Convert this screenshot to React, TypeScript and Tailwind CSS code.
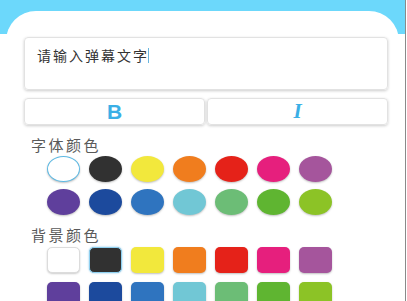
import React from "react";

const row1 = ["#ffffff", "#313131", "#f2e83c", "#f07d1e", "#e52219", "#e61f7d", "#a5559c"];
const row2 = ["#5f3f9c", "#1c4a9d", "#2f74bf", "#71c7d5", "#6cbd76", "#5fb531", "#8cc326"];

function Circle({ c, selected }: { c: string; selected?: boolean }) {
  return (
    <div
      className={
        "w-[33px] h-[26px] rounded-[50%] shadow-[0_1px_2px_rgba(0,0,0,0.25)] " +
        (selected ? "border-[1.5px] border-[#5db9e3]" : "")
      }
      style={{ backgroundColor: c }}
    />
  );
}

function Square({ c, idx }: { c: string; idx: number }) {
  let extra = "shadow-[0_1px_2px_rgba(0,0,0,0.25)]";
  if (idx === 0) extra = "border border-[#dcdcdc] shadow-[0_1px_2px_rgba(0,0,0,0.2)]";
  if (idx === 1) extra = "border-[1.5px] border-[#8fd0f0] shadow-[0_0_2px_rgba(90,180,230,0.8)]";
  return <div className={"w-[33px] h-[26px] rounded-[5px] " + extra} style={{ backgroundColor: c }} />;
}

export default function App() {
  return (
    <div className="w-[407px] h-[301px] overflow-hidden bg-white flex" style={{ fontFamily: '"Noto Sans CJK SC", "Noto Sans", sans-serif' }}>
      <div className="w-[405px] h-[301px] bg-[linear-gradient(to_bottom,#6cd8fb_34px,#ffffff_34px)] pt-[11px] pl-[6px]">
        <div className="w-[393px] h-[300px] bg-white rounded-t-[30px] pt-[26px] pl-[18px]">
          <div className="w-[364px] h-[53px] border border-[#e2e2e2] rounded-[4px] shadow-[0_1px_3px_rgba(0,0,0,0.2)] pl-[12px] pt-[7px] flex items-start">
            <span className="text-[14px] leading-[20px] tracking-[2px] text-[#333]">请输入弹幕文字</span>
            <span className="w-[1px] h-[15px] bg-[#6ab6de] mt-[3px] -ml-[1px]" />
          </div>
          <div className="flex gap-[2px] mt-[8px] w-[364px]">
            <div className="w-[181px] h-[27px] border border-[#e2e2e2] rounded-[4px] shadow-[0_1px_3px_rgba(0,0,0,0.2)] flex items-center justify-center">
              <span className="text-[#3aafe6] font-bold text-[21px] leading-none" style={{ fontFamily: '"Liberation Sans", sans-serif' }}>B</span>
            </div>
            <div className="w-[181px] h-[27px] border border-[#e2e2e2] rounded-[4px] shadow-[0_1px_3px_rgba(0,0,0,0.2)] flex items-center justify-center">
              <span className="text-[#3aafe6] font-bold italic text-[21px] leading-none" style={{ fontFamily: '"Liberation Serif", serif' }}>I</span>
            </div>
          </div>
          <div className="mt-[11px] ml-[7px] text-[15px] leading-[18px] tracking-[2.5px] text-[#5a5a5a]">字体颜色</div>
          <div className="ml-[23px] mt-[2px] flex flex-col gap-[7px]">
            <div className="flex gap-[9px]">
              {row1.map((c, i) => (
                <Circle key={i} c={c} selected={i === 0} />
              ))}
            </div>
            <div className="flex gap-[9px]">
              {row2.map((c, i) => (
                <Circle key={i} c={c} />
              ))}
            </div>
          </div>
          <div className="mt-[11px] ml-[7px] text-[15px] leading-[18px] tracking-[2.5px] text-[#5a5a5a]">背景颜色</div>
          <div className="ml-[23px] mt-[3px] flex flex-col gap-[9px]">
            <div className="flex gap-[9px]">
              {row1.map((c, i) => (
                <Square key={i} c={c} idx={i} />
              ))}
            </div>
            <div className="flex gap-[9px]">
              {row2.map((c, i) => (
                <Square key={i} c={c} idx={i + 10} />
              ))}
            </div>
          </div>
        </div>
      </div>
      <div className="w-[1px] h-[301px] bg-[#8a8a8a]" />
      <div className="w-[1px] h-[301px] bg-white" />
    </div>
  );
}
